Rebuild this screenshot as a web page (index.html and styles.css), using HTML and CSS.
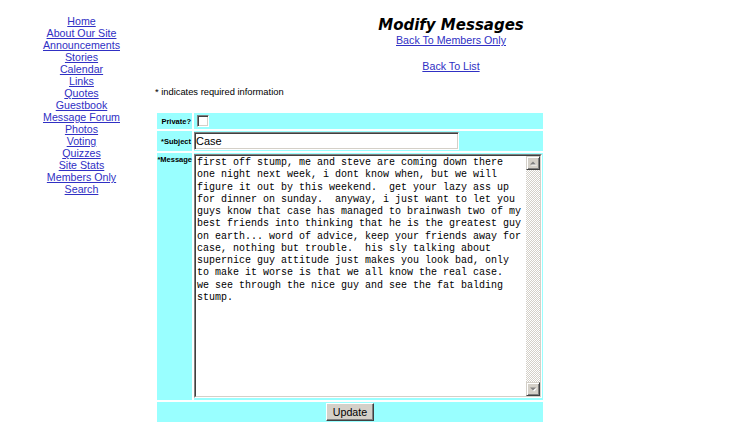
FILE: index.html
```html
<!DOCTYPE html>
<html>
<head>
<meta charset="utf-8">
<title>Modify Messages</title>
<link rel="stylesheet" href="styles.css">
</head>
<body>
<div class="page">
  <nav class="nav">
    <a href="#">Home</a>
    <a href="#">About Our Site</a>
    <a href="#">Announcements</a>
    <a href="#">Stories</a>
    <a href="#">Calendar</a>
    <a href="#">Links</a>
    <a href="#">Quotes</a>
    <a href="#">Guestbook</a>
    <a href="#">Message Forum</a>
    <a href="#">Photos</a>
    <a href="#">Voting</a>
    <a href="#">Quizzes</a>
    <a href="#">Site Stats</a>
    <a href="#">Members Only</a>
    <a href="#">Search</a>
  </nav>
  <main class="main">
    <h1 class="title">Modify Messages</h1>
    <div class="center-link"><a href="#">Back To Members Only</a></div>
    <div class="center-link spaced"><a href="#">Back To List</a></div>
    <p class="note">* indicates required information</p>
    <form class="form">
      <div class="label">Private?</div>
      <div class="field"><span class="check"></span></div>
      <div class="label">*Subject</div>
      <div class="field"><input class="subject" type="text" value="Case"></div>
      <div class="label top">*Message</div>
      <div class="field top">
        <div class="ta"><div class="ta-in"><textarea class="msg">first off stump, me and steve are coming down there
one night next week, i dont know when, but we will
figure it out by this weekend.  get your lazy ass up
for dinner on sunday.  anyway, i just want to let you
guys know that case has managed to brainwash two of my
best friends into thinking that he is the greatest guy
on earth... word of advice, keep your friends away for
case, nothing but trouble.  his sly talking about
supernice guy attitude just makes you look bad, only
to make it worse is that we all know the real case.
we see through the nice guy and see the fat balding
stump.</textarea>
          <div class="sb">
            <div class="sb-btn"><svg width="10" height="10" viewBox="0 0 10 10"><polygon points="2,6.5 5,3.5 8,6.5" fill="#fff" transform="translate(1,1)"/><polygon points="2,6.5 5,3.5 8,6.5" fill="#808080"/></svg></div>
            <div class="sb-track"></div>
            <div class="sb-btn"><svg width="10" height="10" viewBox="0 0 10 10"><polygon points="2,3.5 5,6.5 8,3.5" fill="#fff" transform="translate(1,1)"/><polygon points="2,3.5 5,6.5 8,3.5" fill="#808080"/></svg></div>
          </div>
        </div></div>
      </div>
      <div class="submit-row"><button class="btn" type="button">Update</button></div>
    </form>
  </main>
</div>
</body>
</html>
```
FILE: styles.css
```css
html, body {
  margin: 0;
  padding: 0;
  background: #fff;
}
body {
  padding: 8px 3px 8px 8px;
  font-family: "Liberation Sans", Arial, sans-serif;
  color: #000;
}
a {
  color: #3030c4;
  text-decoration: underline;
}
.page {
  display: flex;
  align-items: flex-start;
}
.nav {
  width: 147px;
  flex: none;
  display: flex;
  flex-direction: column;
  align-items: center;
  padding-top: 7px;
  font-size: 10.67px;
  line-height: 12px;
}
.main {
  flex: 1;
  display: flex;
  flex-direction: column;
}
.title {
  margin: 8px 0 0;
  text-align: center;
  font-family: "DejaVu Sans", Verdana, sans-serif;
  font-weight: bold;
  font-style: italic;
  font-size: 15px;
  line-height: 18px;
}
.center-link {
  text-align: center;
  font-size: 10.67px;
  line-height: 12px;
}
.center-link.spaced {
  margin-top: 14px;
}
.note {
  margin: 14px 0 0;
  font-size: 9.33px;
  line-height: 12px;
}
.form {
  margin-top: 13px;
  width: 390px;
  box-sizing: border-box;
  padding: 2px;
  display: grid;
  grid-template-columns: 35px 349px;
  grid-template-rows: 16px 20px 247px 20px;
  gap: 2px;
  background: #fff;
}
.label {
  background: #99ffff;
  font-weight: bold;
  font-size: 7.5px;
  text-align: right;
  display: flex;
  align-items: center;
  justify-content: flex-end;
  padding-right: 1px;
  white-space: nowrap;
}
.label.top {
  align-items: flex-start;
  padding-top: 2px;
  padding-right: 0;
}
.field {
  background: #99ffff;
  display: flex;
  align-items: center;
}
.field.top {
  align-items: flex-start;
  padding-top: 1px;
}
.check {
  display: block;
  width: 10px;
  height: 10px;
  margin-left: 3px;
  background: #fff;
  border: 1px solid;
  border-color: #808080 #fff #fff #808080;
  box-shadow: inset 1px 1px #404040, inset -1px -1px #d4d0c8;
}
.subject {
  width: 265px;
  height: 18px;
  box-sizing: border-box;
  margin: 0;
  padding: 0 1px;
  font-family: "Liberation Sans", Arial, sans-serif;
  font-size: 11px;
  color: #000;
  background: #fff;
  border: 1px solid;
  border-color: #808080 #fff #fff #808080;
  box-shadow: inset 1px 1px #404040, inset -1px -1px #d4d0c8;
  outline: none;
}
.ta {
  width: 348px;
  height: 244px;
  box-sizing: border-box;
  border: 1px solid;
  border-color: #808080 #fff #fff #808080;
}
.ta-in {
  height: 100%;
  box-sizing: border-box;
  border: 1px solid;
  border-color: #404040 #d4d0c8 #d4d0c8 #404040;
  display: flex;
  background: #fff;
}
.msg {
  flex: 1;
  min-width: 0;
  margin: 0;
  border: 0;
  padding: 1px 1px;
  resize: none;
  overflow: hidden;
  outline: none;
  font-family: "Liberation Mono", "Courier New", monospace;
  font-size: 10px;
  line-height: 12.25px;
  color: #000;
  background: #fff;
  white-space: pre;
}
.sb {
  width: 14px;
  flex: none;
  display: flex;
  flex-direction: column;
}
.sb-btn {
  width: 14px;
  height: 14px;
  box-sizing: border-box;
  background: #d4d0c8;
  border: 1px solid;
  border-color: #d4d0c8 #404040 #404040 #d4d0c8;
  box-shadow: inset 1px 1px #fff, inset -1px -1px #808080;
  display: flex;
  align-items: center;
  justify-content: center;
}
.sb-btn svg {
  display: block;
}
.sb-track {
  flex: 1;
  background: repeating-conic-gradient(#d4d0c8 0 25%, #fff 0 50%) 0 0 / 2px 2px;
}
.submit-row {
  grid-column: 1 / 3;
  background: #99ffff;
  display: flex;
  align-items: center;
  justify-content: center;
}
.btn {
  height: 18px;
  margin: 0;
  padding: 0 6px;
  font-family: "Liberation Sans", Arial, sans-serif;
  font-size: 10.67px;
  color: #000;
  background: #d4d0c8;
  border: 1px solid;
  border-color: #fff #404040 #404040 #fff;
  box-shadow: inset -1px -1px #808080;
  cursor: default;
}
```
